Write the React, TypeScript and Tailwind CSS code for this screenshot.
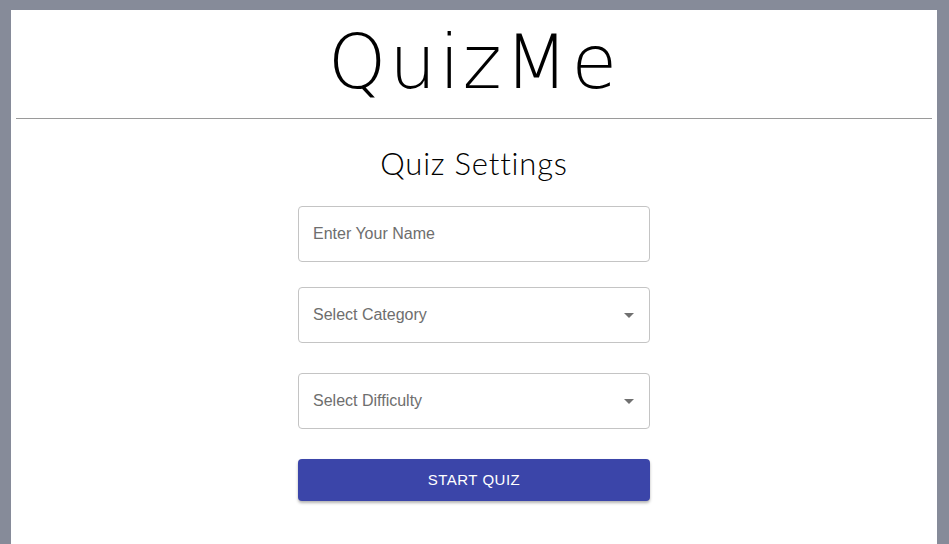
function Field({ label, select }: { label: string; select?: boolean }) {
  return (
    <div className="flex h-[56px] w-full items-center justify-between rounded border border-[#c4c4c4] pl-[14px] pr-[14px]">
      <span className="font-['Liberation_Sans',sans-serif] text-[16px] text-[#6e6e6e]">{label}</span>
      {select && (
        <svg width="10" height="5" viewBox="0 0 10 5" className="mr-[1px]">
          <path d="M0 0 L10 0 L5 5 Z" fill="#707070" />
        </svg>
      )}
    </div>
  );
}

export default function App() {
  return (
    <div className="min-h-screen bg-[#868b99] pl-[11px] pr-[12px] pt-[10px]">
      <div className="flex min-h-[534px] flex-col bg-white">
        {/* header */}
        <h1 className="pt-[8px] text-center font-['DejaVu_Sans',sans-serif] text-[74px] font-extralight leading-[88px] tracking-[3px] text-black">
          QuizMe
        </h1>
        <hr className="mx-[5px] mt-[12px] border-t border-[#9a9a9a]" />

        {/* settings form */}
        <div className="mx-auto flex w-[352px] flex-col items-center pt-[26px]">
          <h2 className="font-['Lato',sans-serif] text-[31px] font-light leading-[36px] tracking-[0.8px] text-black">Quiz Settings</h2>
          <div className="mt-[25px] w-full">
            <Field label="Enter Your Name" />
          </div>
          <div className="mt-[25px] w-full">
            <Field label="Select Category" select />
          </div>
          <div className="mt-[30px] w-full">
            <Field label="Select Difficulty" select />
          </div>
          <button className="mt-[30px] h-[42px] w-full rounded bg-[#3b45a9] font-['Liberation_Sans',sans-serif] text-[15px] tracking-[0.5px] text-white shadow-[0_2px_3px_rgba(0,0,0,0.3)]">
            START QUIZ
          </button>
        </div>
      </div>
    </div>
  );
}
